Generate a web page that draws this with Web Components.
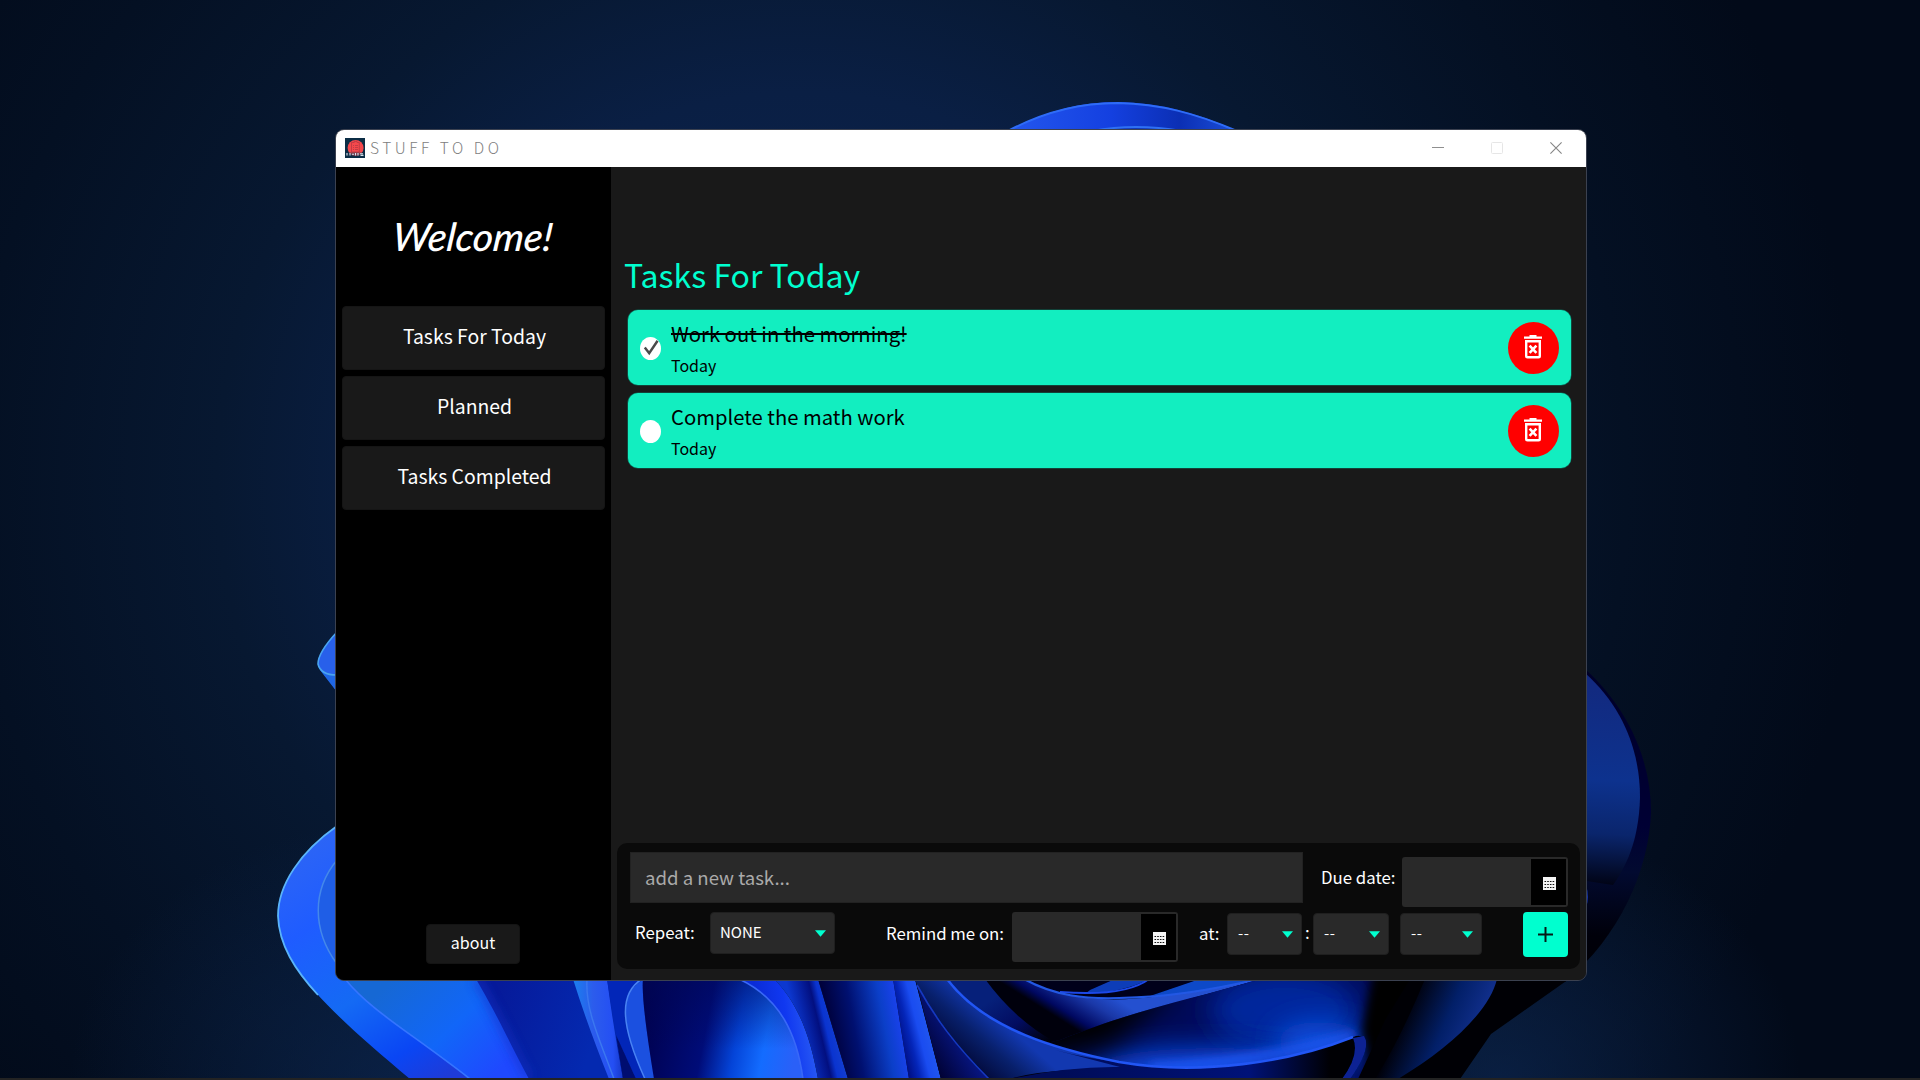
<!DOCTYPE html>
<html lang="en">
<head>
<meta charset="utf-8">
<title>Stuff To Do</title>
<style>
html,body{margin:0;height:100%;overflow:hidden;background:#04102a}
body{font-family:"Noto Sans CJK SC","Noto Sans",sans-serif}
</style>
</head>
<body>
<todo-desktop>
  <app-window label="STUFF TO DO">
    <side-bar slot="side">
      <nav-button>Tasks For Today</nav-button>
      <nav-button>Planned</nav-button>
      <nav-button>Tasks Completed</nav-button>
    </side-bar>
    <task-list slot="main" heading="Tasks For Today">
      <task-card done when="Today">Work out in the morning!</task-card>
      <task-card when="Today">Complete the math work</task-card>
      <task-composer slot="foot"></task-composer>
    </task-list>
  </app-window>
</todo-desktop>
<script>
const define = (name, html, init) => {
  const t = document.createElement('template');
  t.innerHTML = html;
  customElements.define(name, class extends HTMLElement {
    constructor() {
      super();
      this.attachShadow({mode: 'open'}).append(t.content.cloneNode(true));
    }
    connectedCallback() { if (init) init(this, this.shadowRoot); }
  });
};

define('wall-paper', `
<style>:host{display:block;width:1920px;height:1080px}svg{display:block}</style>
<svg width="1920" height="1080" viewBox="0 0 1920 1080">
<defs>
<radialGradient id="bg" gradientUnits="userSpaceOnUse" cx="0" cy="0" r="1" gradientTransform="translate(800 480) scale(1060 1020)">
<stop offset="0" stop-color="#0c2653"/><stop offset=".38" stop-color="#0a1f44"/><stop offset=".55" stop-color="#071831"/><stop offset=".78" stop-color="#041023"/><stop offset="1" stop-color="#020a19"/></radialGradient>
<radialGradient id="glow"><stop offset="0" stop-color="#0c2650" stop-opacity=".7"/><stop offset="1" stop-color="#0c2650" stop-opacity="0"/></radialGradient>
<linearGradient id="top" x1="0" x2="1"><stop offset="0" stop-color="#2457ee"/><stop offset=".45" stop-color="#1440e0"/><stop offset=".75" stop-color="#0b2fb4"/><stop offset="1" stop-color="#1c4fd8"/></linearGradient>
<linearGradient id="pet" gradientUnits="userSpaceOnUse" x1="290" y1="840" x2="440" y2="1080"><stop offset="0" stop-color="#2e66f4"/><stop offset=".3" stop-color="#1f5cff"/><stop offset=".6" stop-color="#146af4"/><stop offset=".85" stop-color="#0a46f4"/><stop offset="1" stop-color="#1e3bd8"/></linearGradient>
<linearGradient id="pet2" gradientUnits="userSpaceOnUse" x1="400" y1="970" x2="500" y2="1070"><stop offset="0" stop-color="#1668d4"/><stop offset=".55" stop-color="#1166f8"/><stop offset="1" stop-color="#1f49ff"/></linearGradient>
<linearGradient id="nav" gradientUnits="userSpaceOnUse" x1="490" y1="1020" x2="590" y2="1050"><stop offset="0" stop-color="#061a9a"/><stop offset="1" stop-color="#0429b0"/></linearGradient>
<linearGradient id="rib" x1="0" x2="1"><stop offset="0" stop-color="#1b80ee"/><stop offset=".4" stop-color="#2c5cec"/><stop offset=".8" stop-color="#244ff4"/><stop offset="1" stop-color="#1638c8"/></linearGradient>
<linearGradient id="arch" gradientUnits="userSpaceOnUse" x1="643" y1="1000" x2="800" y2="1030"><stop offset="0" stop-color="#00004c"/><stop offset=".42" stop-color="#000c78"/><stop offset=".62" stop-color="#0444d8"/><stop offset=".8" stop-color="#136cff"/><stop offset="1" stop-color="#2a60f8"/></linearGradient>
<linearGradient id="archTop" x1="0" y1="0" x2="0" y2="1"><stop offset="0" stop-color="#000858" stop-opacity=".55"/><stop offset=".7" stop-color="#000858" stop-opacity="0"/></linearGradient>
<linearGradient id="b1" gradientUnits="userSpaceOnUse" x1="760" y1="1020" x2="812" y2="1012"><stop offset="0" stop-color="#0a2cd8"/><stop offset=".5" stop-color="#1038f0"/><stop offset="1" stop-color="#2a5cf4"/></linearGradient>
<linearGradient id="b2" gradientUnits="userSpaceOnUse" x1="795" y1="1020" x2="838" y2="1010"><stop offset="0" stop-color="#0c38d0"/><stop offset=".5" stop-color="#020f80"/><stop offset=".65" stop-color="#0a34d0"/><stop offset="1" stop-color="#1844d0"/></linearGradient>
<linearGradient id="b3" gradientUnits="userSpaceOnUse" x1="828" y1="1030" x2="902" y2="1016"><stop offset="0" stop-color="#000038"/><stop offset=".35" stop-color="#001070"/><stop offset=".75" stop-color="#0b3fc8"/><stop offset="1" stop-color="#1c42f0"/></linearGradient>
<linearGradient id="b4" gradientUnits="userSpaceOnUse" x1="898" y1="1030" x2="930" y2="1022"><stop offset="0" stop-color="#001088"/><stop offset=".3" stop-color="#0425b8"/><stop offset=".6" stop-color="#1a4cf0"/><stop offset="1" stop-color="#2258f0"/></linearGradient>
<linearGradient id="b5" gradientUnits="userSpaceOnUse" x1="925" y1="1060" x2="965" y2="1035"><stop offset="0" stop-color="#00002c"/><stop offset="1" stop-color="#08188c"/></linearGradient>
<linearGradient id="fold" gradientUnits="userSpaceOnUse" x1="1012" y1="1030" x2="968" y2="1080"><stop offset="0" stop-color="#1238b0"/><stop offset=".4" stop-color="#08206c"/><stop offset="1" stop-color="#000024"/></linearGradient>
<linearGradient id="b6" gradientUnits="userSpaceOnUse" x1="1020" y1="979" x2="1060" y2="1035"><stop offset="0" stop-color="#06207a"/><stop offset=".5" stop-color="#020c60"/><stop offset="1" stop-color="#000006"/></linearGradient>
<linearGradient id="b7" gradientUnits="userSpaceOnUse" x1="1110" y1="995" x2="1085" y2="1035"><stop offset="0" stop-color="#2450d0"/><stop offset=".35" stop-color="#1a38a8"/><stop offset=".8" stop-color="#000860"/><stop offset="1" stop-color="#00000c"/></linearGradient>
<linearGradient id="under" gradientUnits="userSpaceOnUse" x1="1060" y1="0" x2="1330" y2="0"><stop offset="0" stop-color="#000c58"/><stop offset=".7" stop-color="#001278"/><stop offset="1" stop-color="#000004"/></linearGradient>
<linearGradient id="edge" gradientUnits="userSpaceOnUse" x1="1405" y1="1010" x2="1475" y2="1040"><stop offset="0" stop-color="#000008"/><stop offset=".55" stop-color="#021f68"/><stop offset="1" stop-color="#12308e"/></linearGradient>
<linearGradient id="rt" gradientUnits="userSpaceOnUse" x1="1610" y1="690" x2="1600" y2="890"><stop offset="0" stop-color="#122a80"/><stop offset=".45" stop-color="#0d328e"/><stop offset=".72" stop-color="#0a256c"/><stop offset="1" stop-color="#00000c"/></linearGradient>
<linearGradient id="rtd" x1="0" x2="0" y1="0" y2="1"><stop offset="0" stop-color="#000028"/><stop offset=".5" stop-color="#000034"/><stop offset=".65" stop-color="#020a30"/><stop offset=".85" stop-color="#00000a"/><stop offset="1" stop-color="#000004"/></linearGradient>
<filter id="s"><feGaussianBlur stdDeviation=".7"/></filter>
<filter id="m" x="-50%" y="-50%" width="200%" height="200%"><feGaussianBlur stdDeviation="5"/></filter>
<filter id="l" x="-60%" y="-100%" width="220%" height="300%"><feGaussianBlur stdDeviation="14"/></filter>
<clipPath id="sheet"><path d="M1060 1040C1140 1008 1190 1000 1260 979H1440L1375 1079H1350C1358 1062 1366 1046 1363 1038Q1360 1034 1353 1037C1290 1062 1200 1076 1119 1062Q1080 1055 1046 1043Z"/></clipPath>
</defs>
<rect width="1920" height="1080" fill="url(#bg)"/>
<ellipse cx="400" cy="1080" rx="330" ry="260" fill="url(#glow)"/>
<ellipse cx="1500" cy="1080" rx="300" ry="260" fill="url(#glow)"/>
<path d="M1008 131C1045 111 1080 102 1118 102C1160 103 1195 112 1237 131Z" fill="url(#top)"/>
<path d="M1008 131C1045 111 1080 103 1118 103C1160 104 1195 113 1237 131" fill="none" stroke="#2f6cf8" stroke-width="2" filter="url(#s)"/>
<path d="M1092 131Q1135 123 1182 131" fill="#1238b8" stroke="#2f70f4" stroke-width="2"/>
<path d="M337 632C324 646 318 656 318 664C320 672 329 679 337 692Z" fill="#2860ea"/>
<path d="M318 662C320 673 329 675 337 675L337 692Q326 678 320 670Z" fill="#1f66e4"/>
<path d="M337 632C324 646 318 656 318 664C320 673 329 675 337 675" fill="none" stroke="#48a4f0" stroke-width="1.6" filter="url(#s)"/>
<path d="M337 826C300 852 278 885 278 916C280 966 330 1012 410 1079H540L480 975H337Z" fill="url(#pet)"/>
<path d="M337 826C300 852 278 885 278 916C279 945 295 970 318 995" fill="none" stroke="#5ab4fa" stroke-width="1.8" filter="url(#s)"/>
<path d="M337 860C312 890 312 930 337 964Z" fill="#1f5ee6" stroke="#4488ea" stroke-width="1.5"/>
<path d="M345 979C372 1012 410 1032 470 1079H560L500 979Z" fill="url(#pet2)"/>
<path d="M345 979C372 1012 410 1032 470 1079" fill="none" stroke="#3474ff" stroke-width="1.6" filter="url(#s)"/>
<path d="M476 979C500 1020 510 1044 529 1079H660V979Z" fill="url(#nav)"/>
<path d="M476 979C500 1020 510 1044 529 1079" fill="none" stroke="#1230c8" stroke-width="9" opacity=".6" filter="url(#m)"/>
<path d="M573 979Q587 1024 609 1079H623Q614 1032 607 979Z" fill="url(#rib)"/>
<path d="M587 979C585 1010 600 1040 614 1079" fill="none" stroke="#3b78f0" stroke-width="1.4" filter="url(#s)"/>
<path d="M607 979L623 1079H645C615 1015 620 998 640 979Z" fill="#0226b8"/>
<path d="M616 1035L623 1079H636Z" fill="#001070" filter="url(#s)"/>
<path d="M645 979C618 992 620 1024 645 1079H656L646 1015Z" fill="#1b50e0"/>
<path d="M642 979C618 994 621 1026 645 1079" fill="none" stroke="#4882f4" stroke-width="1.5" filter="url(#s)"/>
<path d="M643 979Q641 1000 654 1079H804C800 1034 780 998 739 979Z" fill="url(#arch)"/>
<path d="M643 979Q641 1000 654 1079H804C800 1034 780 998 739 979Z" fill="url(#archTop)"/>
<path d="M739 979C780 998 797 1034 803 1079H818C811 1040 800 1005 774 979Z" fill="url(#b1)"/>
<path d="M739 979C780 998 797 1034 803 1079" fill="none" stroke="#3968f8" stroke-width="1.5" filter="url(#s)"/>
<path d="M774 979C800 1005 811 1040 818 1079H848L818 979Z" fill="url(#b2)"/>
<path d="M818 979L848 1079H909L893 979Z" fill="url(#b3)"/>
<path d="M893 979L909 1079H941L915 979Z" fill="url(#b4)"/>
<path d="M915 979L941 1079H1400V979Z" fill="#00000c"/>
<path d="M917 985L941 1079H989C955 1045 935 1018 917 985Z" fill="url(#b5)"/>
<path d="M915 979H947C985 1030 1060 1050 1119 1062Q1150 1068 1180 1068Q1050 1066 1010 1079H989C955 1045 935 1018 917 985Z" fill="url(#fold)"/>
<path d="M917 985C935 1018 955 1045 989 1079" fill="none" stroke="#1438c0" stroke-width="1.6" filter="url(#s)"/>
<path d="M947 979C985 1030 1060 1050 1119 1062L1060 1042L1130 1010V979Z" fill="url(#b6)"/>
<path d="M1024 979C1060 1000 1110 1003 1160 996Q1210 989 1260 979C1190 1000 1140 1010 1055 1042Q1015 1020 985 979Z" fill="url(#b7)"/>
<path d="M1024 979C1055 996 1085 999 1119 998C1170 997 1210 990 1260 979H1024Z" fill="#00001a"/>
<path d="M1150 996L1200 979H1260C1210 990 1190 994 1150 996Z" fill="#0b48c8" filter="url(#s)"/>
<path d="M1090 990L1115 979H1149Q1125 992 1085 994Z" fill="#0b3cb8" filter="url(#s)"/>
<path d="M1060 992Q1125 997 1149 979" fill="none" stroke="#1c48e8" stroke-width="2" filter="url(#s)"/>
<path d="M1024 979C1055 996 1085 999 1119 998C1170 997 1210 990 1260 979" fill="none" stroke="#2458e4" stroke-width="2" filter="url(#s)"/>
<path d="M1055 1050Q1085 1058 1119 1062C1200 1076 1290 1062 1353 1037Q1366 1031 1364 1041L1350 1079H1010Q1070 1066 1120 1067Z" fill="url(#under)"/>
<g clip-path="url(#sheet)">
<rect x="1040" y="975" width="410" height="110" fill="#000a58"/>
<ellipse cx="1285" cy="1010" rx="75" ry="40" fill="#02269c" filter="url(#l)"/>
<ellipse cx="1215" cy="1072" rx="130" ry="24" fill="#0b48e0" filter="url(#l)"/>
<ellipse cx="1320" cy="1042" rx="45" ry="20" fill="#0b50e0" filter="url(#l)"/>
<path d="M1150 1072Q1260 1066 1356 1037L1352 1032Q1260 1058 1150 1064Z" fill="#205af8" filter="url(#m)"/>
<path d="M1000 1000L1180 985L1110 1046L1040 1060Z" fill="#000006" filter="url(#l)"/>
<path d="M1375 960H1480V1090H1372Q1368 1050 1362 1030Z" fill="#000006" filter="url(#m)"/>
</g>
<path d="M947 979C985 1030 1060 1050 1119 1062C1200 1076 1290 1062 1353 1037" fill="none" stroke="#2056f4" stroke-width="2.6" filter="url(#s)"/>
<path d="M1353 1038Q1360 1055 1342 1079H1350Q1372 1048 1364 1036Z" fill="#0a2494" filter="url(#s)"/>
<path d="M1410 979H1569L1491 1034L1460 1079H1358Q1374 1045 1385 1020Z" fill="#000005"/>
<path d="M1425 979H1497C1490 1010 1450 1048 1398 1079H1375Q1400 1040 1425 979Z" fill="url(#edge)"/>
<path d="M1585 669C1628 708 1651 760 1651 812C1649 870 1620 936 1565 982H1500V900Z" fill="url(#rtd)"/>
<path d="M1585 673C1622 706 1640 750 1640 797C1639 842 1625 868 1613 885L1580 880Z" fill="url(#rt)"/>
<path d="M1586 885Q1590 897 1586 908" fill="#1230a0"/>
<rect y="1078" width="1920" height="2" fill="#232323"/>
</svg>`);

define('todo-desktop', `
<style>
:host{display:block;position:relative;width:1920px;height:1080px;overflow:hidden}
wall-paper{position:absolute;left:0;top:0}
::slotted(app-window){position:absolute;left:335px;top:129px}
</style><wall-paper></wall-paper><slot></slot>`);

define('app-window', `
<style>
:host{display:flex;flex-direction:column;box-sizing:border-box;width:1252px;height:852px;border:1px solid #3b4150;border-radius:9px;overflow:hidden;background:#191919}
header{display:flex;height:37px;background:#fff;padding:0 24px 0 9px;align-items:center;box-sizing:border-box;flex:none}
.logo{width:20px;height:20px;margin:-1px 5px 0 0}
.t{font-size:15.5px;font-weight:300;line-height:20px;color:#808080;letter-spacing:3.55px;flex:1;margin-top:-3px}
.ctl{display:flex;gap:47px;align-items:center;margin-top:-1px}
.ctl svg{display:block}
.body{display:flex;flex:1;min-height:0}
</style>
<header>
<svg class="logo" viewBox="0 0 20 20"><rect width="20" height="20" fill="#0b2d45"/><circle cx="10.6" cy="10" r="8" fill="#f5484c"/><path d="M6.5 4.5H9.2V3.4H12V4.5H14.3V14H6.5Z" fill="none" stroke="#b83a42" stroke-width=".8"/><path d="M8 7.5h1m1 0h3M8 9.5h1m1 0h3M8 11.5h1m1 0h3" stroke="#b83a42" stroke-width=".8"/><path d="M1 14.5H19V18H1Z" fill="#23364d" opacity=".6"/><path d="M2 15v2.6M5 15v2.6M7 16.2h2M10.5 15v2.6M13 15v2.6M15 15.8h3M15.5 17.4h3" stroke="#d8e4ee" stroke-width="1.1"/></svg>
<span class="t"></span>
<div class="ctl">
<svg width="12" height="12"><path d="M0 5.5h12" stroke="#8f8f8f"/></svg>
<svg width="12" height="12"><rect x=".5" y=".5" width="11" height="11" rx="1" fill="none" stroke="#e6e6e6"/></svg>
<svg width="12" height="12"><path d="M.4.4l11.2 11.2M11.6.4L.4 11.6" stroke="#858585" stroke-width="1.1"/></svg>
</div>
</header>
<div class="body"><slot name="side"></slot><slot name="main"></slot></div>`,
(h, r) => r.querySelector('.t').textContent = h.getAttribute('label'));

define('side-bar', `
<style>
:host{display:flex;flex-direction:column;box-sizing:border-box;width:275px;background:#000;color:#fff;padding:0 6px 16px;align-items:stretch;flex:none}
h1{font:italic 500 39px/60px Lato,sans-serif;height:99px;padding-top:39px;margin:0;text-align:center}
h1 span{display:inline-block;transform:skewX(-6deg)}
nav{display:flex;flex-direction:column;gap:6px;flex:1;margin-top:1px}
button{align-self:center;margin-right:2px;width:94px;height:40px;border:1px solid #141414;border-radius:4px;background:#191919;color:#fff;font:16px/20px "Noto Sans CJK SC",sans-serif;padding:0 0 4px 1px}
</style>
<h1><span>Welcome!</span></h1><nav><slot></slot></nav><button>about</button>`);

define('nav-button', `
<style>:host{display:flex;box-sizing:border-box;height:64px;border-radius:4px;background:#191919;border:1px solid #151515;align-items:center;justify-content:center;font-size:19.4px;line-height:24px;padding:0 0 5px 2px}</style>
<span><slot></slot></span>`);

define('task-list', `
<style>
:host{display:flex;flex-direction:column;box-sizing:border-box;width:975px;height:813px;background:#191919;padding:0 6px 11px}
h2{margin:0;padding:83px 0 0 7px;height:60px;font-weight:400;font-size:32px;line-height:48px;color:#00ffcf}
.list{display:flex;flex-direction:column;gap:8px;padding:0 9px 0 11px;flex:1}
</style>
<h2></h2><div class="list"><slot></slot></div><slot name="foot"></slot>`,
(h, r) => r.querySelector('h2').textContent = h.getAttribute('heading'));

define('task-card', `
<style>
:host{display:flex;box-sizing:border-box;height:75px;border-radius:10px;background:#12eec0;align-items:center;padding:0 12px;color:#000;box-shadow:0 0 0 .6px #0c6a58}
.c{width:21px;height:23px;border-radius:50%;background:#fff;margin-top:2px}
.c svg{display:none}
:host([done]) .c svg{display:block}
:host([done]) .n{text-decoration:line-through;text-decoration-thickness:1.5px}
.x{display:flex;flex-direction:column;flex:1;margin-left:9px;align-items:flex-start;height:75px}
.n{font-size:20.25px;line-height:28px;padding:0 1px;margin-top:10px;height:28px}
.w{font-size:16px;line-height:20px;margin-top:7px;margin-left:1px}
.d{width:51px;height:52px;border-radius:50%;background:#f00;display:flex;justify-content:center;align-items:center}
.d svg{margin:-1px 1px 0 0}
</style>
<div class="c"><svg width="21" height="23"><path d="M4.8 10.6L9.2 16.2L17.6 3.8" fill="none" stroke="#4a4a4a" stroke-width="2.5"/></svg></div>
<div class="x"><span class="n"><slot></slot></span><span class="w"></span></div>
<div class="d"><svg width="18" height="24" viewBox="0 0 18 24" fill="none" stroke="#fff"><path d="M0 2.7H18M5.5 1.2H12.5" stroke-width="2.3"/><path d="M2.2 6.3H15.8V21a1.3 1.3 0 0 1-1.3 1.3H3.5A1.3 1.3 0 0 1 2.2 21Z" stroke-width="2.4"/><path d="M5.6 10.6L12.4 17.8M12.4 10.6L5.6 17.8" stroke-width="2.6"/></svg></div>`,
(h, r) => r.querySelector('.w').textContent = h.getAttribute('when'));

define('date-field', `
<style>
:host{display:flex;box-sizing:border-box;width:166px;height:50px;background:#292929;border-radius:3px;padding:2px;justify-content:flex-end;flex:none}
.b{width:35px;height:46px;background:#000;display:flex;justify-content:center;align-items:center;box-sizing:border-box;padding:3px 0 0 2px}
</style>
<div class="b"><svg width="13" height="13" viewBox="0 0 13 13"><path d="M0 0H13V13H0Z" fill="#f4f4f4"/><path d="M1.5 4.5H12M1.5 7.5H12M1.5 10.5H12" stroke="#111" stroke-width="1.2" stroke-dasharray="1.6 1.1"/></svg></div>`);

define('drop-down', `
<style>
:host{display:flex;box-sizing:border-box;height:42px;background:#292929;border:1px solid #1f1f1f;border-radius:4px;align-items:center;padding:0 8px 0 9px;color:#fff;font-size:15px;line-height:20px;flex:none}
span{flex:1;margin-top:-3px}
:host([blank]) span{letter-spacing:.6px;margin-left:1px}
</style>
<span><slot></slot></span><svg width="11" height="7"><path d="M0 .3H11L5.5 6.8Z" fill="#00ffcf"/></svg>`);

define('task-composer', `
<style>
:host{display:flex;flex-direction:column;box-sizing:border-box;width:963px;height:126px;border-radius:10px;background:#0a0a0a;padding:9px 12px 0 13px;color:#fff;font-size:16.8px;line-height:24px}
.r{display:flex;align-items:flex-start;height:60px;flex:none}
.in{width:673px;height:51px;box-sizing:border-box;background:#292929;border:1px solid #222;color:#aaa;font-size:18.6px;line-height:24px;padding:12px 0 0 14px}
.l{white-space:nowrap;flex:none;box-sizing:border-box}
.plus{width:45px;height:45px;background:#00ffcf;border-radius:4px;display:flex;align-items:center;justify-content:center;margin-left:41px}
</style>
<div class="r"><div class="in"><span>add a new task...</span></div>
<div class="l" style="width:81px;margin:13px 0 0 18px"><span>Due date:</span></div><date-field style="margin-top:5px"></date-field></div>
<div class="r">
<div class="l" style="width:75px;margin:8px 0 0 5px"><span>Repeat:</span></div>
<drop-down style="width:125px">NONE</drop-down>
<div class="l" style="width:126px;margin:9px 0 0 51px"><span>Remind me on:</span></div>
<date-field></date-field>
<div class="l" style="width:28px;margin:9px 0 0 21px"><span>at:</span></div>
<drop-down blank style="width:75px;margin-top:1px">--</drop-down>
<div class="l" style="width:8px;margin:8px 0 0 3px"><span>:</span></div>
<drop-down blank style="width:76px;margin-top:1px">--</drop-down>
<drop-down blank style="width:82px;margin:1px 0 0 11px">--</drop-down>
<div class="plus"><svg width="15" height="15"><path d="M0 7.5H15M7.5 0V15" stroke="#061a16" stroke-width="2"/></svg></div>
</div>`);
</script>
</body>
</html>
